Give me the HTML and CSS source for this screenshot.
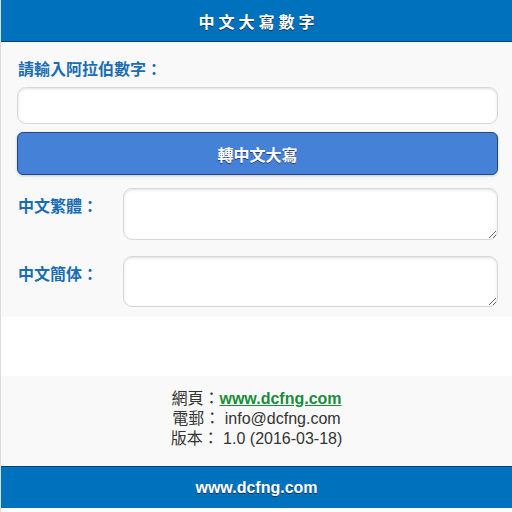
FILE: index.html
```html
<!DOCTYPE html>
<html lang="zh-Hant">
<head>
<meta charset="utf-8">
<title>中文大寫數字</title>
<link rel="stylesheet" href="styles.css">
</head>
<body>
<div class="page">
  <header class="bar bar-top"><h1 class="title">中文大寫數字</h1></header>
  <main class="content">
    <label class="field-label" for="num">請輸入阿拉伯數字：</label>
    <input class="text-input" id="num" type="text">
    <button class="btn" type="button">轉中文大寫</button>
    <div class="row">
      <label class="row-label" for="trad">中文繁體：</label>
      <textarea class="area" id="trad"></textarea>
    </div>
    <div class="row row-2">
      <label class="row-label" for="simp">中文簡体：</label>
      <textarea class="area area-2" id="simp"></textarea>
    </div>
  </main>
  <div class="spacer"></div>
  <section class="info">
    <div>網頁：<a class="link" href="#">www.dcfng.com</a></div>
    <div>電郵： info@dcfng.com</div>
    <div>版本： 1.0 (2016-03-18)</div>
  </section>
  <footer class="bar bar-bottom">www.dcfng.com</footer>
</div>
</body>
</html>
```
FILE: styles.css
```css
* { box-sizing: border-box; }
html, body { margin: 0; padding: 0; background: #fff; }
body {
  font-family: "Liberation Sans", "Noto Sans CJK TC", Arial, sans-serif;
  font-size: 16px;
  color: #333;
}
.page {
  border-left: 1px solid #dcdcdc;
  min-height: 512px;
}
.bar {
  background: #0071bc;
  color: #fff;
  text-align: center;
  font-weight: bold;
}
.bar-top {
  height: 42px;
  border-bottom: 1px solid #00457a;
  display: flex;
  align-items: center;
  justify-content: center;
}
.title {
  margin: 0;
  font-family: "Noto Sans CJK TC", sans-serif;
  font-size: 16px;
  font-weight: bold;
  letter-spacing: 4px;
  padding-left: 4px;
  text-shadow: 0 1px 0 #1d2f52;
}
.content {
  background: #f9f9f9;
  padding: 15px 14px 10px 16px;
  display: flex;
  flex-direction: column;
}
.field-label {
  font-family: "Noto Sans CJK TC", sans-serif;
  color: #1a6db5;
  font-weight: bold;
  font-size: 16px;
  line-height: 22px;
  margin: 0 0 8px 1px;
}
.text-input {
  height: 37px;
  border: 1px solid #d8d8d8;
  border-radius: 9px;
  background: #fff;
  box-shadow: inset 0 1px 3px rgba(0,0,0,0.12);
  outline: none;
}
.btn {
  margin-top: 8px;
  height: 43px;
  background: #4681d8;
  border: 1px solid #27467e;
  border-radius: 6px;
  box-shadow: 0 1px 3px rgba(0,0,0,0.2);
  color: #fff;
  font-family: "Noto Sans CJK TC", sans-serif;
  font-size: 16px;
  font-weight: bold;
  text-shadow: 0 1px 0 #27406b;
}
.row {
  display: flex;
  margin-top: 13px;
}
.row-2 { margin-top: 16px; }
.row-label {
  flex: 0 0 106px;
  font-family: "Noto Sans CJK TC", sans-serif;
  color: #1a6db5;
  font-weight: bold;
  font-size: 16px;
  line-height: 22px;
  padding: 6px 0 0 1px;
}
.area {
  flex: 1;
  height: 52px;
  border: 1px solid #d8d8d8;
  border-radius: 9px;
  background: #fff;
  box-shadow: inset 0 1px 3px rgba(0,0,0,0.12);
  outline: none;
  margin: 0;
}
.area-2 { height: 51px; }
.spacer { height: 59px; background: #fff; }
.info {
  background: #f9f9f9;
  text-align: center;
  line-height: 20px;
  padding: 13px 0 17px;
  font-size: 16px;
  color: #333;
}
.link {
  color: #1a8c3d;
  font-weight: bold;
}
.bar-bottom {
  height: 42px;
  border-top: 1px solid #00457a;
  display: flex;
  align-items: center;
  justify-content: center;
  font-size: 16px;
  text-shadow: 0 1px 0 #1d2f52;
}
```
